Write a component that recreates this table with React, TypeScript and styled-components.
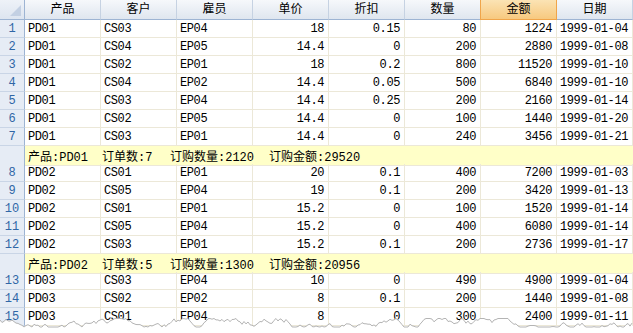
import React from 'react'
import styled, { createGlobalStyle } from 'styled-components'

const GlobalStyle = createGlobalStyle`
  html, body {
    margin: 0;
    padding: 0;
    background: #ffffff;
  }
  body {
    font-family: 'Liberation Mono', 'Noto Sans CJK SC', monospace;
    font-size: 12px;
  }
`

type Order = {
  no: number
  product: string
  customer: string
  employee: string
  price: string
  discount: string
  qty: string
  amount: string
  date: string
}

type Group = {
  product: string
  orders: number
  qty: number
  amount: number
}

type Item = { kind: 'row'; order: Order } | { kind: 'group'; group: Group }

const raw: string[] = [
  'PD01 CS03 EP04 18 0.15 80 1224 1999-01-04',
  'PD01 CS04 EP05 14.4 0 200 2880 1999-01-08',
  'PD01 CS02 EP01 18 0.2 800 11520 1999-01-10',
  'PD01 CS04 EP02 14.4 0.05 500 6840 1999-01-10',
  'PD01 CS03 EP04 14.4 0.25 200 2160 1999-01-14',
  'PD01 CS02 EP05 14.4 0 100 1440 1999-01-20',
  'PD01 CS03 EP01 14.4 0 240 3456 1999-01-21',
  'PD02 CS01 EP01 20 0.1 400 7200 1999-01-03',
  'PD02 CS05 EP04 19 0.1 200 3420 1999-01-13',
  'PD02 CS01 EP01 15.2 0 100 1520 1999-01-14',
  'PD02 CS05 EP04 15.2 0 400 6080 1999-01-14',
  'PD02 CS03 EP01 15.2 0.1 200 2736 1999-01-17',
  'PD03 CS03 EP04 10 0 490 4900 1999-01-04',
  'PD03 CS02 EP02 8 0.1 200 1440 1999-01-08',
  'PD03 CS01 EP04 8 0 300 2400 1999-01-11',
]

const orders: Order[] = raw.map((line, i) => {
  const [product, customer, employee, price, discount, qty, amount, date] =
    line.split(' ')
  return { no: i + 1, product, customer, employee, price, discount, qty, amount, date }
})

const items: Item[] = [
  ...orders.slice(0, 7).map((order) => ({ kind: 'row' as const, order })),
  { kind: 'group', group: { product: 'PD01', orders: 7, qty: 2120, amount: 29520 } },
  ...orders.slice(7, 12).map((order) => ({ kind: 'row' as const, order })),
  { kind: 'group', group: { product: 'PD02', orders: 5, qty: 1300, amount: 20956 } },
  ...orders.slice(12).map((order) => ({ kind: 'row' as const, order })),
]

const columns = ['产品', '客户', '雇员', '单价', '折扣', '数量', '金额', '日期']

const Sheet = styled.div`
  position: relative;
  width: 633px;
  height: 333px;
  overflow: hidden;
  background: #ffffff;
  color: #000000;
`

const Row = styled.div`
  display: grid;
  grid-template-columns: 25px repeat(8, 76px);
  height: 18px;
`

const HeaderRow = styled(Row)`
  height: 20px;
`

const Corner = styled.div`
  position: relative;
  box-sizing: border-box;
  background: linear-gradient(#eef2f8, #dde5f0);
  border-right: 1px solid #9db4d3;
  border-bottom: 1px solid #9db4d3;
  &::after {
    content: '';
    position: absolute;
    right: 3px;
    bottom: 3px;
    width: 0;
    height: 0;
    border-left: 11px solid transparent;
    border-bottom: 11px solid #c3d0e3;
  }
`

const HeadCell = styled.div<{ $active?: boolean }>`
  box-sizing: border-box;
  display: flex;
  align-items: center;
  justify-content: center;
  font-size: 12px;
  line-height: 1;
  padding-top: 1px;
  background: ${(p) =>
    p.$active
      ? 'linear-gradient(#fbe3b4, #f7c97f)'
      : 'linear-gradient(#f6f8fb, #dfe6ef)'};
  border-right: 1px solid ${(p) => (p.$active ? '#f0a54a' : '#c6d2e2')};
  border-left: ${(p) => (p.$active ? '1px solid #f0a54a' : 'none')};
  border-bottom: 1px solid ${(p) => (p.$active ? '#f0a54a' : '#9db4d3')};
  margin-left: ${(p) => (p.$active ? '-1px' : '0')};
`

const RowHead = styled.div`
  box-sizing: border-box;
  display: flex;
  align-items: center;
  justify-content: center;
  background: #e6ecf5;
  color: #2f66a6;
  border-right: 1px solid #9db4d3;
  border-bottom: 1px solid #c9d5e6;
  padding-top: 1px;
`

const Cell = styled.div<{ $right?: boolean }>`
  box-sizing: border-box;
  display: flex;
  align-items: center;
  justify-content: ${(p) => (p.$right ? 'flex-end' : 'flex-start')};
  padding: 1px 4px 0 3px;
  letter-spacing: -0.4px;
  white-space: nowrap;
  overflow: hidden;
  border-right: 1px solid #ece8d8;
  border-bottom: 1px solid #ece8d8;
`

const GroupBar = styled.div`
  grid-column: 2 / span 8;
  box-sizing: border-box;
  display: flex;
  align-items: center;
  padding: 1px 0 0 3px;
  background: #ffffc8;
  border-bottom: 1px solid #ece8d8;
  white-space: nowrap;
`

const GroupItem = styled.span<{ $w: number }>`
  width: ${(p) => p.$w}px;
  flex: none;
`

const TornEdge = styled.svg`
  position: absolute;
  left: 0;
  bottom: 0;
  display: block;
`

function tornPoints() {
  let seed = 7
  const rand = () => {
    seed = (seed * 16807) % 2147483647
    return seed / 2147483647
  }
  const pts: [number, number][] = []
  let y = 6
  for (let x = 0; x <= 633; x += 2) {
    y += (rand() - 0.5) * 6
    if (y < 1.5) y = 1.5
    if (y > 10) y = 10
    pts.push([x, y])
  }
  return pts
}

const edge = tornPoints()
const line = edge.map(([x, y]) => `${x},${y.toFixed(1)}`).join(' ')
const fill = `0,16 ${line} 633,16`

const App = () => {
  return (
    <Sheet>
      <GlobalStyle />
      <HeaderRow>
        <Corner />
        {columns.map((c) => (
          <HeadCell key={c} $active={c === '金额'}>
            {c}
          </HeadCell>
        ))}
      </HeaderRow>
      {items.map((item, i) =>
        item.kind === 'row' ? (
          <Row key={i}>
            <RowHead>{item.order.no}</RowHead>
            <Cell>{item.order.product}</Cell>
            <Cell>{item.order.customer}</Cell>
            <Cell>{item.order.employee}</Cell>
            <Cell $right>{item.order.price}</Cell>
            <Cell $right>{item.order.discount}</Cell>
            <Cell $right>{item.order.qty}</Cell>
            <Cell $right>{item.order.amount}</Cell>
            <Cell>{item.order.date}</Cell>
          </Row>
        ) : (
          <Row key={i}>
            <RowHead />
            <GroupBar>
              <GroupItem $w={74}>产品:{item.group.product}</GroupItem>
              <GroupItem $w={68}>订单数:{item.group.orders}</GroupItem>
              <GroupItem $w={99}>订购数量:{item.group.qty}</GroupItem>
              <GroupItem $w={150}>订购金额:{item.group.amount}</GroupItem>
            </GroupBar>
          </Row>
        )
      )}
      <TornEdge width={633} height={16} viewBox="0 0 633 16">
        <polygon points={fill} fill="#ffffff" />
        <polyline points={line} fill="none" stroke="#b4b4b4" strokeWidth={1} />
      </TornEdge>
    </Sheet>
  )
}

export default App
